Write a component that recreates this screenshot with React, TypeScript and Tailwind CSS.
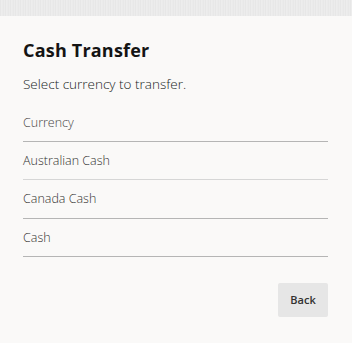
import React from "react";

export default function App() {
  const rows = ["Australian Cash", "Canada Cash", "Cash"];
  return (
    <div
      className="w-[352px] h-[343px] flex flex-col bg-[#e9e9e9]"
      style={{ fontFamily: '"Open Sans", "Noto Sans", sans-serif' }}
    >
      <div className="h-[16px] bg-[repeating-linear-gradient(90deg,#e4e4e4_0px,#f0f0f0_2px,#e6e6e6_3px,#eeeeee_5px)]" />
      <div className="flex-1 bg-[#faf9f8] px-[23px] pt-[22px] flex flex-col">
        <h1 className="text-[18px] leading-[24px] font-bold text-[#141414] tracking-[0.2px]">
          Cash Transfer
        </h1>
        <p className="mt-[12px] text-[13.5px] leading-[20px] font-light text-[#201f1e]">
          Select currency to transfer.
        </p>
        <div className="mt-[10px] mr-px">
          <div className="h-[38px] flex items-center pt-[2px] border-b border-[#b5b5b5] text-[12.5px] font-light text-[#484644]">
            Currency
          </div>
          {rows.map((r, i) => (
            <div
              key={r}
              className={
                i === 0
                  ? "h-[38px] flex items-center pt-[2px] border-b border-[#d6d6d6] text-[12.5px] font-light text-[#323130]"
                  : "h-[38.5px] flex items-center pt-[2px] border-b border-[#b5b5b5] text-[12.5px] font-light text-[#323130]"
              }
            >
              {r}
            </div>
          ))}
        </div>
        <div className="flex justify-end mt-[26px] mr-px">
          <button className="w-[50px] h-[34px] rounded-[2px] bg-[#e6e6e6] text-[11px] font-semibold text-[#323130]">
            Back
          </button>
        </div>
      </div>
    </div>
  );
}
